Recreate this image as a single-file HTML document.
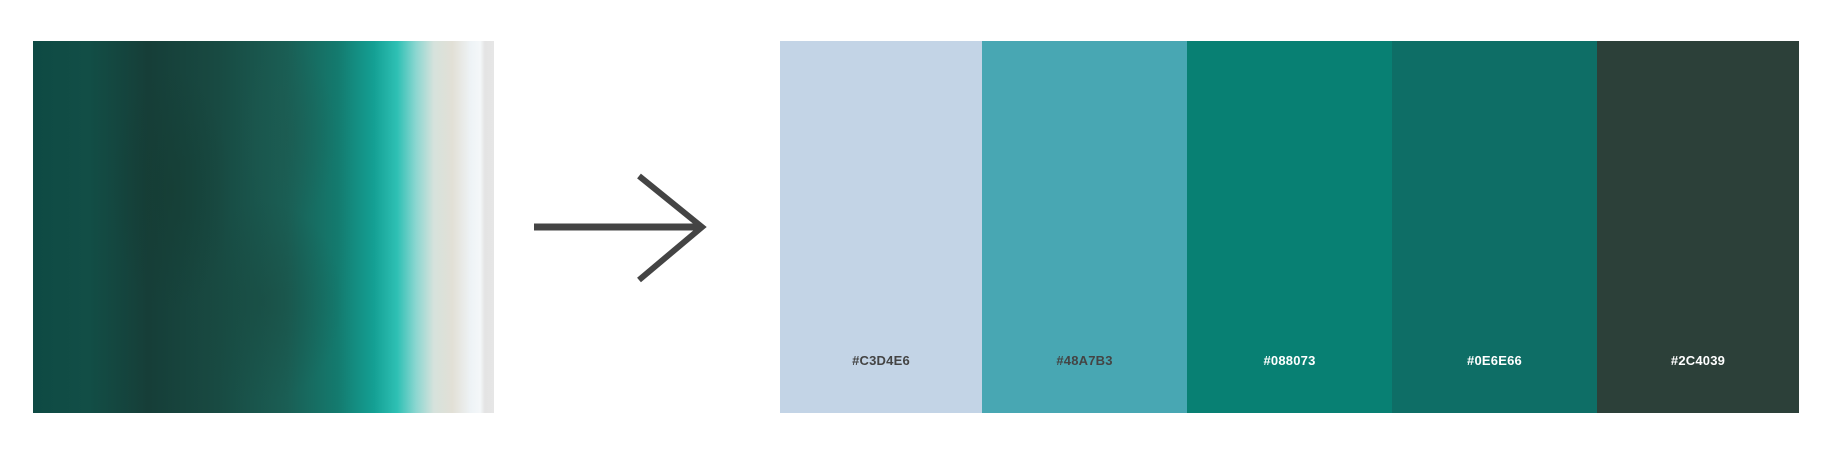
<!DOCTYPE html>
<html><head><meta charset="utf-8"><style>
html,body{margin:0;padding:0;background:#fff;width:1841px;height:453px;overflow:hidden;position:relative;font-family:"Liberation Sans",sans-serif}
#img{position:absolute;left:33px;top:41px;width:461px;height:372px;
background:
radial-gradient(ellipse 60px 120px at 30% 40%,rgba(20,60,50,.5),transparent),
radial-gradient(ellipse 80px 100px at 50% 70%,rgba(25,70,60,.4),transparent),
radial-gradient(ellipse 50px 90px at 55% 25%,rgba(30,90,80,.4),transparent),
linear-gradient(90deg,#0e4a44 0%,#124e46 12%,#163e38 25%,#184a42 40%,#1a5e54 55%,#147a6e 66%,#14a094 74%,#2ec0b4 79%,#8ad6d0 83%,#d6e2dc 87%,#e2e0d6 91%,#eef3f6 95%,#f4f7f9 97%,#e4e4e4 98%,#e6e6e6 100%);}
.sw{position:absolute;top:41px;height:372px}
.sw span{position:absolute;left:0;right:0;top:312px;text-align:center;font-weight:bold;font-size:13px;letter-spacing:.2px}
</style></head><body>
<div id="img"></div>
<svg style="position:absolute;left:0;top:0" width="1841" height="453">
<line x1="534" y1="227" x2="700" y2="227" stroke="#444" stroke-width="7"/>
<polyline points="639,176 702,227 639,280" fill="none" stroke="#444" stroke-width="6"/>
</svg>
<div class="sw" style="left:780px;width:202px;background:#C3D4E6"><span style="color:#444">#C3D4E6</span></div>
<div class="sw" style="left:982px;width:205px;background:#48A7B3"><span style="color:#444">#48A7B3</span></div>
<div class="sw" style="left:1187px;width:205px;background:#088073"><span style="color:#fff">#088073</span></div>
<div class="sw" style="left:1392px;width:205px;background:#0E6E66"><span style="color:#fff">#0E6E66</span></div>
<div class="sw" style="left:1597px;width:202px;background:#2C4039"><span style="color:#fff">#2C4039</span></div>
</body></html>
